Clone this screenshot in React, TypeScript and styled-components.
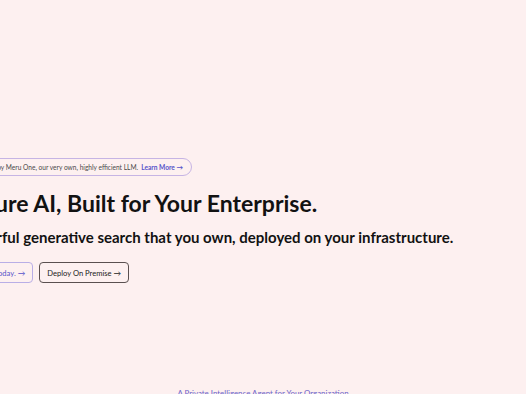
import styled, { createGlobalStyle } from "styled-components";

const GlobalStyle = createGlobalStyle`
  html, body {
    margin: 0;
    padding: 0;
    background: #fdf0f0;
    overflow: hidden;
  }
  body {
    font-family: Lato, "Noto Sans", sans-serif;
    color: #121212;
  }
`;

const Page = styled.div`
  width: 526px;
  height: 394px;
  display: flex;
  flex-direction: column;
  align-items: center;
  overflow: hidden;
`;

const HeroRow = styled.div`
  width: 100%;
  display: flex;
  justify-content: center;
  padding-top: 158px;
`;

/* hero column is wider than the window, so it spills over both edges */
const Hero = styled.section`
  flex: 0 0 608px;
  display: flex;
  flex-direction: column;
  align-items: flex-start;
`;

const Pill = styled.div`
  display: inline-flex;
  align-items: center;
  gap: 3px;
  height: 16px;
  padding: 0 8px 0 10px;
  border: 1px solid #c6b4e4;
  border-radius: 9px;
  font-size: 6.6px;
  color: #4a4a4a;
  white-space: nowrap;
`;

const PillLink = styled.a`
  color: #5552c9;
  font-weight: 700;
  text-decoration: none;
`;

const Heading = styled.h1`
  margin: 13px 0 0;
  font-size: 23px;
  font-weight: 700;
  line-height: 28px;
  white-space: nowrap;
`;

const Sub = styled.p`
  margin: 11px 0 0;
  font-size: 15px;
  font-weight: 700;
  line-height: 19px;
  white-space: nowrap;
`;

const Actions = styled.div`
  display: flex;
  gap: 6px;
  margin-top: 15px;
`;

const Button = styled.button<{ $variant: "accent" | "plain" }>`
  height: 21px;
  padding: 0 7px;
  border-radius: 4px;
  background: transparent;
  font-family: inherit;
  font-size: 7.6px;
  font-weight: 400;
  white-space: nowrap;
  border: 1px solid ${(p) => (p.$variant === "accent" ? "#b9aee6" : "#5a5050")};
  color: ${(p) => (p.$variant === "accent" ? "#5552c9" : "#222")};
`;

const Tagline = styled.div`
  margin-top: auto;
  margin-bottom: -4px;
  font-size: 7.9px;
  color: #6c63c9;
  white-space: nowrap;
`;

export default function App() {
  return (
    <>
      <GlobalStyle />
      <Page>
        <HeroRow>
          <Hero>
            <Pill>
              Powered by Meru One, our very own, highly efficient LLM.
              <PillLink href="#">Learn More →</PillLink>
            </Pill>
            <Heading>Secure AI, Built for Your Enterprise.</Heading>
            <Sub>Powerful generative search that you own, deployed on your infrastructure.</Sub>
            <Actions>
              <Button $variant="accent">Sign Up Today. →</Button>
              <Button $variant="plain">Deploy On Premise →</Button>
            </Actions>
          </Hero>
        </HeroRow>
        <Tagline>A Private Intelligence Agent for Your Organization</Tagline>
      </Page>
    </>
  );
}
